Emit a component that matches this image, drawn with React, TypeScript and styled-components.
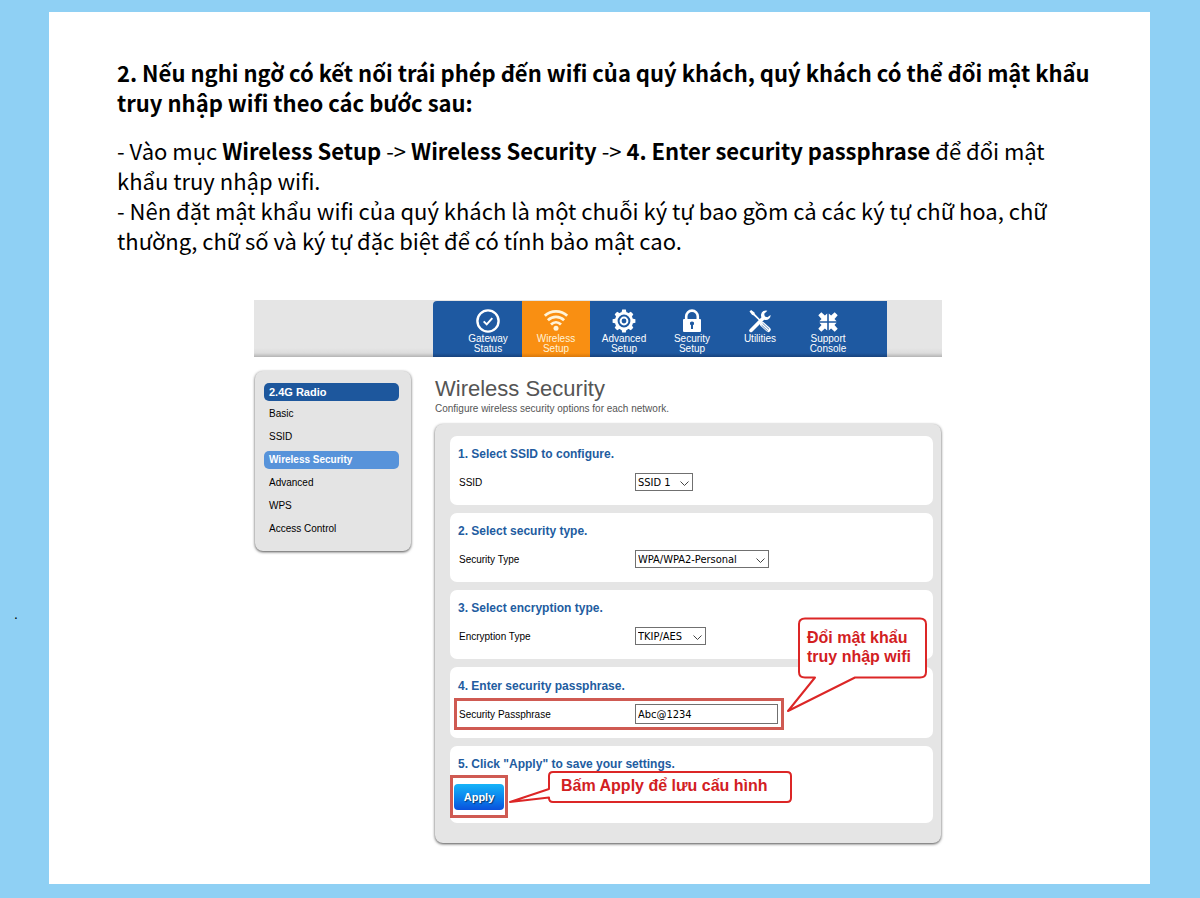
import React from 'react';
import styled, { createGlobalStyle, css } from 'styled-components';

const GlobalStyle = createGlobalStyle`
  *, *::before, *::after { box-sizing: border-box; }
  body {
    margin: 0;
    background: #8fd0f4;
    color: #000;
    font-family: "Liberation Sans", Arial, sans-serif;
  }
`;

const Page = styled.main`
  position: relative;
  padding: 12px 50px 14px 49px;
`;

const StrayDot = styled.span`
  position: absolute;
  left: 14px;
  top: 607px;
  font-size: 14px;
  line-height: 14px;
`;

const Sheet = styled.article`
  padding: 45px 0 41px;
  background: #fff;
`;

const Guide = styled.section`
  padding: 0 40px 0 68px;
  font-family: "Noto Sans CJK JP", "Noto Sans", sans-serif;
  font-size: 22px;
  line-height: 30px;
`;

const GuideTitle = styled.h1`
  margin: 0 0 18px;
  font-size: 22px;
  line-height: 30px;
  font-weight: 700;
`;

const GuideText = styled.p`
  margin: 0;
`;

const Figure = styled.div`
  padding: 45px 71px 0 68px;
`;

const Router = styled.section`
  max-width: 688px;
  margin: 0 auto;
`;

const TopBar = styled.header`
  display: flex;
  height: 57px;
  padding: 1px 55px 0 179px;
  background: linear-gradient(#e5e5e5 48px, #dcdcdc 53px, #b4b4b4);
`;

const Nav = styled.nav`
  display: flex;
  flex: 1;
  padding: 0 25px 0 21px;
  border-radius: 4px 0 0 0;
  background: linear-gradient(#1e59a1 52px, #17427c);
`;

const NavLink = styled.a<{ $active?: boolean }>`
  display: flex;
  flex: 1;
  flex-direction: column;
  align-items: center;
  padding-top: 7px;
  color: ${(p) => (p.$active ? '#fff3d8' : '#fff')};
  background: ${(p) => (p.$active ? 'linear-gradient(#f98f12 52px, #d8780c)' : 'transparent')};
  font-size: 10px;
  line-height: 10px;
  text-align: center;
  text-decoration: none;

  svg { width: 26px; height: 26px; flex: none; }
`;

const Body = styled.div`
  display: flex;
  align-items: flex-start;
  gap: 24px;
  padding: 14px 1px 0;
`;

const Sidebar = styled.aside`
  flex: none;
  width: 156px;
  min-height: 180px;
  padding: 12px 12px 0 9px;
  border-radius: 8px;
  background: #e4e4e4;
  box-shadow: 0 1px 3px rgba(0, 0, 0, 0.7);
`;

const MenuTitle = styled.h2`
  margin: 0 0 4px;
  padding: 0 5px;
  border-radius: 5px;
  background: #1d579d;
  color: #fff;
  font-size: 11px;
  line-height: 18px;
`;

const Menu = styled.ul`
  display: grid;
  gap: 5px;
  margin: 0;
  padding: 0;
  list-style: none;
`;

const MenuLink = styled.a<{ $active?: boolean }>`
  display: block;
  padding: 0 5px;
  border-radius: 5px;
  color: ${(p) => (p.$active ? '#fff' : '#000')};
  background: ${(p) => (p.$active ? '#5793da' : 'transparent')};
  font-size: 10px;
  font-weight: ${(p) => (p.$active ? 700 : 400)};
  line-height: 18px;
  text-decoration: none;
`;

const Content = styled.div`
  flex: 1;
  min-width: 0;
`;

const PageTitle = styled.h2`
  margin: 4px 0 0;
  color: #555;
  font-size: 22px;
  font-weight: 400;
  line-height: 28px;
`;

const Subtitle = styled.p`
  margin: 0 0 9px;
  color: #555;
  font-size: 10px;
  line-height: 12px;
`;

const Panel = styled.form`
  display: grid;
  gap: 8px;
  padding: 12px 8px 20px 15px;
  border-radius: 8px;
  background: #e5e5e5;
  box-shadow: 0 1px 3px rgba(0, 0, 0, 0.7);
`;

const Card = styled.section<{ $tall?: boolean; $flush?: boolean }>`
  position: relative;
  padding: ${(p) => (p.$tall ? '11px 0' : p.$flush ? '10px 0 5px' : '10px 0')};
  border-radius: 7px;
  background: #fff;
`;

const StepTitle = styled.h3`
  margin: 0;
  padding-left: 8px;
  color: #225c9f;
  font-size: 12px;
  line-height: 16px;
`;

const Row = styled.div<{ $marked?: boolean }>`
  display: flex;
  align-items: center;
  width: fit-content;
  height: 26px;
  margin: 7px 0 0 7px;
  padding: 0 3px 0 2px;
  ${(p) => p.$marked && css`outline: 3px solid #cf5a52;`}
`;

const Label = styled.label`
  width: 176px;
  font-size: 10px;
`;

const controlText = css`
  border: 1px solid #707070;
  border-radius: 0;
  background: #fff;
  color: #000;
  font-family: "DejaVu Sans Condensed", "DejaVu Sans", sans-serif;
  font-size: 11px;
`;

const SelectBox = styled.div<{ $width: number }>`
  position: relative;
  width: ${(p) => p.$width}px;

  svg {
    position: absolute;
    right: 4px;
    top: 6px;
    width: 9px;
    height: 9px;
    pointer-events: none;
  }
`;

const Select = styled.select`
  ${controlText}
  display: block;
  width: 100%;
  height: 18px;
  padding: 0 2px;
  appearance: none;
`;

const TextInput = styled.input`
  ${controlText}
  width: 143px;
  height: 20px;
  padding: 0 2px;
`;

const ApplyFrame = styled.div`
  width: fit-content;
  margin-top: 3px;
  padding: 6px 1px 5px;
  border: 3px solid #cf5a52;
`;

const ApplyButton = styled.button`
  display: block;
  width: 50px;
  height: 26px;
  padding: 0;
  border: 0;
  border-radius: 4px;
  background: linear-gradient(#17b4f8, #0a86ee 50%, #0a50dc);
  color: #fff;
  font: 700 11px "Liberation Sans", Arial, sans-serif;
  text-shadow: 1px 1px 1px rgba(0, 0, 0, 0.5);
`;

const Callout = styled.div`
  position: absolute;
  z-index: 2;
  color: #d2201f;
  font-size: 16px;
  font-weight: 700;
  line-height: 19px;

  svg { position: absolute; inset: 0; }
  p { position: relative; margin: 0; white-space: nowrap; }
`;

const PassCallout = styled(Callout)`
  right: 3px;
  top: -51px;
  width: 145px;
  height: 98px;
  padding: 12px 0 0 22px;
`;

const ApplyCallout = styled(Callout)`
  left: 57px;
  top: 23px;
  width: 286px;
  height: 36px;
  padding: 7px 0 0 54px;
`;

const GatewayIcon = () => (
  <svg viewBox="0 0 26 26" fill="none" stroke="#fff" aria-hidden="true">
    <circle cx="13" cy="13" r="10.600" strokeWidth="2.400" />
    <path d="M8.700 13.400l3 3 5.600-6.300" strokeWidth="2" />
  </svg>
);

const WifiIcon = () => (
  <svg viewBox="0 0 26 26" fill="none" stroke="#fff3d8" strokeWidth="2.800" aria-hidden="true">
    <path d="M1.800 7.800C8 1.800 18 1.800 24.200 7.800" />
    <path d="M4.900 12.200c4.700-4.500 11.500-4.500 16.200 0" />
    <path d="M8 16.500c3-2.900 7-2.900 10 0" />
    <circle cx="13" cy="20.300" r="2.500" fill="#fff3d8" stroke="none" />
  </svg>
);

const GearIcon = () => (
  <svg viewBox="0 0 26 26" fill="none" stroke="#fff" aria-hidden="true">
    <circle cx="13" cy="13" r="7.800" strokeWidth="2.800" />
    <circle cx="13" cy="13" r="3.400" strokeWidth="2" />
    {[0, 45, 90, 135, 180, 225, 270, 315].map((a) => (
      <path key={a} d="M10.400 5l.8-3.400h3.600l.8 3.400z" fill="#fff" stroke="none" transform={`rotate(${a} 13 13)`} />
    ))}
  </svg>
);

const LockIcon = () => (
  <svg viewBox="0 0 26 26" aria-hidden="true">
    <path d="M7.200 12V8.600a5.800 6 0 0 1 11.600 0V12" fill="none" stroke="#fff" strokeWidth="2.600" />
    <rect x="4" y="11" width="18" height="13" rx="1" fill="#fff" />
    <path d="M11 14.600q2-2 4 0v2.200h-1V21h-2v-4.200h-1z" fill="#1e59a1" />
  </svg>
);

const ToolsIcon = () => (
  <svg viewBox="0 0 26 26" fill="none" stroke="#fff" aria-hidden="true">
    <path d="M2.500 3.500l1.600-1.500L7.500 4.500l.4 1.600 7 7.200-1 1-7.200-6.900L5 6.800z" fill="#fff" stroke="none" />
    <path d="M15.600 16.500l5.600 5" strokeWidth="5" strokeLinecap="round" />
    <path d="M15.600 15.300l6.400 6M14.600 17.200l6.200 5.800" stroke="#1e59a1" strokeWidth=".7" />
    <path d="M4 22.400L16.600 9.800" strokeWidth="3.600" strokeLinecap="round" />
    <path d="M20.400 2.700a4.800 4.800 0 1 0 3.200 4.400l-3.200 2.100-2.600-.8-.6-2.600z" fill="#fff" stroke="none" />
  </svg>
);

const SupportIcon = () => (
  <svg viewBox="0 0 26 26" fill="#fff" aria-hidden="true">
    {[0, 90, 180, 270].map((a) => (
      <path key={a} d="M12.200 13.200V5.400L9.900 7.500 6.300 4.300 3.300 7.300l3.200 3.600L4.400 13.200z" transform={`rotate(${a} 13 14)`} />
    ))}
  </svg>
);

const Chevron = () => (
  <svg viewBox="0 0 9 9" fill="none" stroke="#444" aria-hidden="true">
    <path d="M.5 2.500l4 4 4-4" />
  </svg>
);

const tabs: { lines: string[]; Icon: () => React.ReactElement; active?: boolean }[] = [
  { lines: ['Gateway', 'Status'], Icon: GatewayIcon },
  { lines: ['Wireless', 'Setup'], Icon: WifiIcon, active: true },
  { lines: ['Advanced', 'Setup'], Icon: GearIcon },
  { lines: ['Security', 'Setup'], Icon: LockIcon },
  { lines: ['Utilities'], Icon: ToolsIcon },
  { lines: ['Support', 'Console'], Icon: SupportIcon },
];

const menu = ['Basic', 'SSID', 'Wireless Security', 'Advanced', 'WPS', 'Access Control'];

const selects = [
  { id: 'ssid', title: '1. Select SSID to configure.', label: 'SSID', value: 'SSID 1', width: 58 },
  { id: 'security', title: '2. Select security type.', label: 'Security Type', value: 'WPA/WPA2-Personal', width: 134 },
  { id: 'encryption', title: '3. Select encryption type.', label: 'Encryption Type', value: 'TKIP/AES', width: 71 },
];

export default function App() {
  return (
    <Page>
      <GlobalStyle />
      <StrayDot>.</StrayDot>
      <Sheet>
        <Guide lang="vi">
          <GuideTitle>
            2. Nếu nghi ngờ có kết nối trái phép đến wifi của quý khách, quý khách có thể đổi mật khẩu
            <br />
            truy nhập wifi theo các bước sau:
          </GuideTitle>
          <GuideText>
            - Vào mục <b>Wireless Setup</b> -&gt; <b>Wireless Security</b> -&gt;{' '}
            <b>4. Enter security passphrase</b> để đổi mật
            <br />
            khẩu truy nhập wifi.
          </GuideText>
          <GuideText>
            - Nên đặt mật khẩu wifi của quý khách là một chuỗi ký tự bao gồm cả các ký tự chữ hoa, chữ
            <br />
            thường, chữ số và ký tự đặc biệt để có tính bảo mật cao.
          </GuideText>
        </Guide>

        <Figure>
          <Router>
            <TopBar>
              <Nav>
                {tabs.map(({ lines, Icon, active }) => (
                  <NavLink key={lines[0]} href="#" $active={active}>
                    <Icon />
                    {lines.map((line) => (
                      <span key={line}>{line}</span>
                    ))}
                  </NavLink>
                ))}
              </Nav>
            </TopBar>

            <Body>
              <Sidebar>
                <MenuTitle>2.4G Radio</MenuTitle>
                <Menu>
                  {menu.map((item) => (
                    <li key={item}>
                      <MenuLink href="#" $active={item === 'Wireless Security'}>{item}</MenuLink>
                    </li>
                  ))}
                </Menu>
              </Sidebar>

              <Content>
                <PageTitle>Wireless Security</PageTitle>
                <Subtitle>Configure wireless security options for each network.</Subtitle>
                <Panel onSubmit={(e) => e.preventDefault()}>
                  {selects.map((s) => (
                    <Card key={s.id}>
                      <StepTitle>{s.title}</StepTitle>
                      <Row>
                        <Label htmlFor={s.id}>{s.label}</Label>
                        <SelectBox $width={s.width}>
                          <Select id={s.id} defaultValue={s.value}>
                            <option>{s.value}</option>
                          </Select>
                          <Chevron />
                        </SelectBox>
                      </Row>
                    </Card>
                  ))}

                  <Card $tall>
                    <StepTitle>4. Enter security passphrase.</StepTitle>
                    <Row $marked>
                      <Label htmlFor="passphrase">Security Passphrase</Label>
                      <TextInput id="passphrase" type="text" defaultValue="Abc@1234" />
                    </Row>
                    <PassCallout lang="vi">
                      <svg width="145" height="98" viewBox="0 0 145 98" fill="#fff" stroke="#dc2626" strokeWidth="2" strokeLinejoin="round" aria-hidden="true">
                        <path d="M20 2.500H135Q141 2.500 141 8V56Q141 61.500 135 61.500H70L3 95 30 61.500H20Q14 61.500 14 56V8Q14 2.500 20 2.500z" />
                      </svg>
                      <p>Đổi mật khẩu<br />truy nhập wifi</p>
                    </PassCallout>
                  </Card>

                  <Card $flush>
                    <StepTitle>5. Click "Apply" to save your settings.</StepTitle>
                    <ApplyFrame>
                      <ApplyButton type="submit">Apply</ApplyButton>
                    </ApplyFrame>
                    <ApplyCallout lang="vi">
                      <svg width="286" height="36" viewBox="0 0 286 36" fill="#fff" stroke="#dc2626" strokeWidth="2" strokeLinejoin="round" aria-hidden="true">
                        <path d="M46 3H280Q284 3 284 7V29Q284 33 280 33H46Q42 33 42 29V28.500L3 33 42 20V7Q42 3 46 3z" />
                      </svg>
                      <p>Bấm Apply để lưu cấu hình</p>
                    </ApplyCallout>
                  </Card>
                </Panel>
              </Content>
            </Body>
          </Router>
        </Figure>
      </Sheet>
    </Page>
  );
}
